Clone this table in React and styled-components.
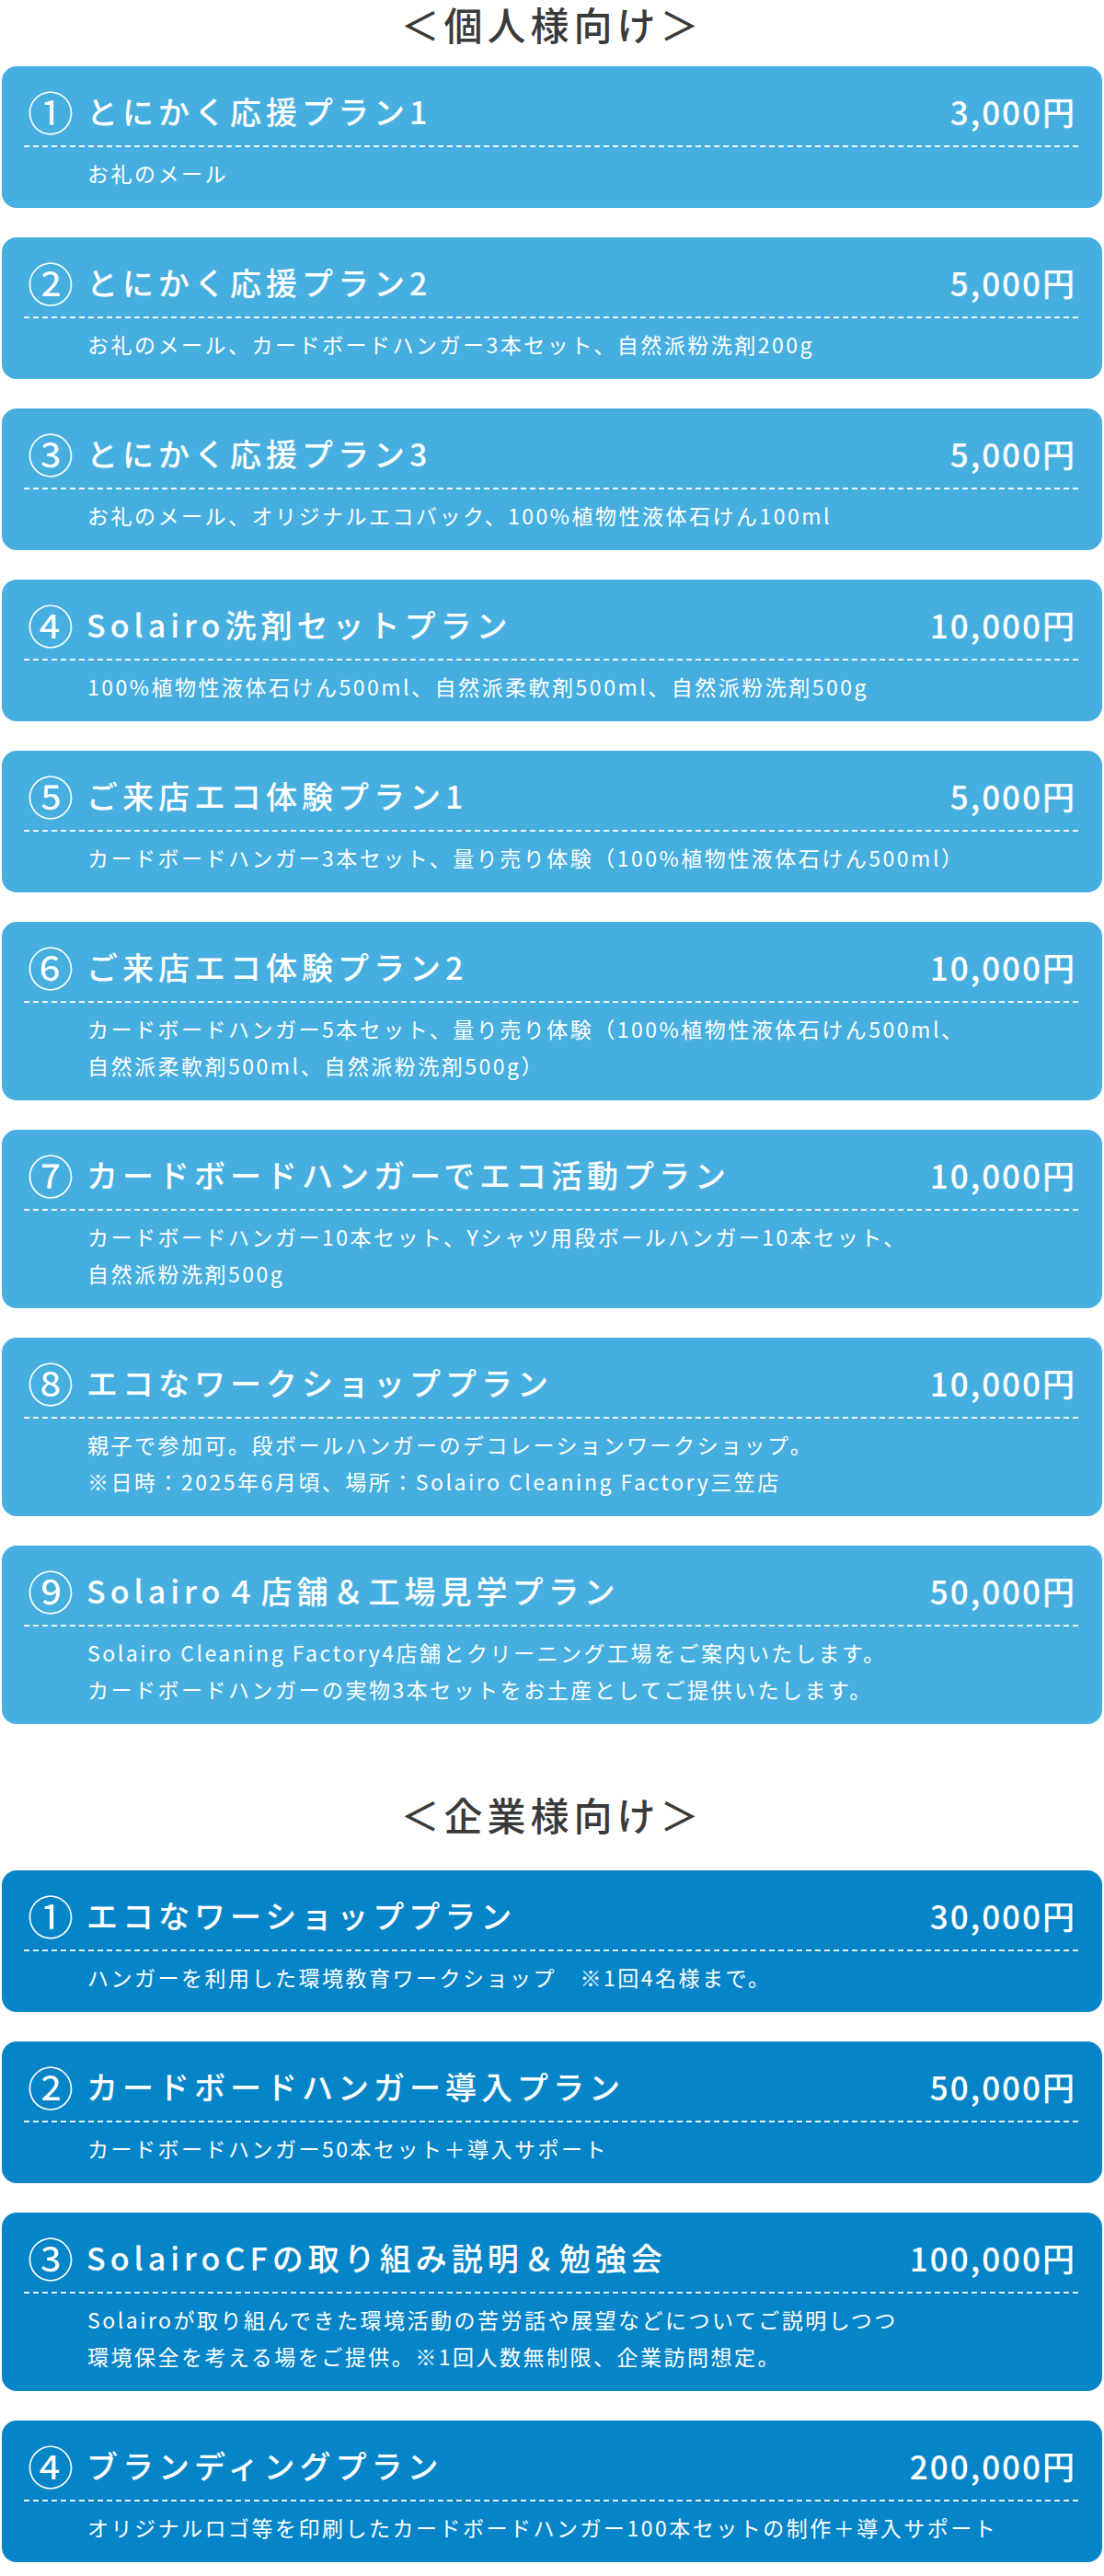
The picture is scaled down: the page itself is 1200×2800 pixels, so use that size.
import React from 'react'
import styled, { createGlobalStyle } from 'styled-components'

const GlobalStyle = createGlobalStyle`
  html, body {
    margin: 0;
    padding: 0;
    background: #ffffff;
  }
  body {
    font-family: "Noto Sans CJK JP", "Noto Sans", sans-serif;
  }
`

const personal = [
  { no: '①', title: 'とにかく応援プラン1', price: '3,000円', lines: ['お礼のメール'] },
  { no: '②', title: 'とにかく応援プラン2', price: '5,000円', lines: ['お礼のメール、カードボードハンガー3本セット、自然派粉洗剤200g'] },
  { no: '③', title: 'とにかく応援プラン3', price: '5,000円', lines: ['お礼のメール、オリジナルエコバック、100%植物性液体石けん100ml'] },
  { no: '④', title: 'Solairo洗剤セットプラン', price: '10,000円', lines: ['100%植物性液体石けん500ml、自然派柔軟剤500ml、自然派粉洗剤500g'] },
  { no: '⑤', title: 'ご来店エコ体験プラン1', price: '5,000円', lines: ['カードボードハンガー3本セット、量り売り体験（100%植物性液体石けん500ml）'] },
  {
    no: '⑥', title: 'ご来店エコ体験プラン2', price: '10,000円',
    lines: ['カードボードハンガー5本セット、量り売り体験（100%植物性液体石けん500ml、', '自然派柔軟剤500ml、自然派粉洗剤500g）'],
  },
  {
    no: '⑦', title: 'カードボードハンガーでエコ活動プラン', price: '10,000円',
    lines: ['カードボードハンガー10本セット、Yシャツ用段ボールハンガー10本セット、', '自然派粉洗剤500g'],
  },
  {
    no: '⑧', title: 'エコなワークショッププラン', price: '10,000円',
    lines: ['親子で参加可。段ボールハンガーのデコレーションワークショップ。', '※日時：2025年6月頃、場所：Solairo Cleaning Factory三笠店'],
  },
  {
    no: '⑨', title: 'Solairo４店舗＆工場見学プラン', price: '50,000円',
    lines: ['Solairo Cleaning Factory4店舗とクリーニング工場をご案内いたします。', 'カードボードハンガーの実物3本セットをお土産としてご提供いたします。'],
  },
]

const business = [
  { no: '①', title: 'エコなワーショッププラン', price: '30,000円', lines: ['ハンガーを利用した環境教育ワークショップ　※1回4名様まで。'] },
  { no: '②', title: 'カードボードハンガー導入プラン', price: '50,000円', lines: ['カードボードハンガー50本セット＋導入サポート'] },
  {
    no: '③', title: 'SolairoCFの取り組み説明＆勉強会', price: '100,000円',
    lines: ['Solairoが取り組んできた環境活動の苦労話や展望などについてご説明しつつ', '環境保全を考える場をご提供。※1回人数無制限、企業訪問想定。'],
  },
  { no: '④', title: 'ブランディングプラン', price: '200,000円', lines: ['オリジナルロゴ等を印刷したカードボードハンガー100本セットの制作＋導入サポート'] },
]

const Page = styled.div`
  width: 1200px;
  padding-bottom: 10px;
`

const Heading = styled.h2`
  margin: ${p => p.$top}px 0 ${p => p.$bottom}px;
  text-align: center;
  font-size: 42px;
  line-height: 52px;
  font-weight: 500;
  letter-spacing: 5px;
  color: #3a3a3a;
`

const List = styled.div`
  display: flex;
  flex-direction: column;
  gap: 32px;
`

const Card = styled.div`
  margin: 0 2px;
  padding: 26px 24px 18px;
  border-radius: 16px;
  background: ${p => (p.$dark ? '#0585c8' : '#46afdf')};
  color: #ffffff;
`

const TitleRow = styled.div`
  display: flex;
  align-items: center;
  justify-content: space-between;
  height: 44px;
  padding: 0 4px;
`

const Title = styled.div`
  display: flex;
  align-items: center;
  font-size: 34px;
  font-weight: 500;
  letter-spacing: 5px;
  white-space: nowrap;
`

const Num = styled.span`
  font-size: 50px;
  line-height: 44px;
  font-weight: 400;
  margin-right: 14px;
  letter-spacing: 0;
`

const Price = styled.div`
  font-size: 35px;
  font-weight: 500;
  letter-spacing: 2px;
  white-space: nowrap;
`

const Dashed = styled.div`
  height: 2px;
  margin-top: 16px;
  background: repeating-linear-gradient(to right, rgba(255, 255, 255, 0.9) 0 6px, transparent 6px 10px);
`

const Desc = styled.div`
  margin-top: 8px;
  padding-left: 69px;
  font-size: 23px;
  line-height: 40px;
  letter-spacing: 2.5px;
`

const Line = styled.div`
  white-space: nowrap;
`

function PlanCard({ plan, dark }) {
  return (
    <Card $dark={dark}>
      <TitleRow>
        <Title>
          <Num>{plan.no}</Num>
          {plan.title}
        </Title>
        <Price>{plan.price}</Price>
      </TitleRow>
      <Dashed />
      <Desc>
        {plan.lines.map((l, i) => (
          <Line key={i}>{l}</Line>
        ))}
      </Desc>
    </Card>
  )
}

export default function App() {
  return (
    <>
      <GlobalStyle />
      <Page>
        <Heading $top={0} $bottom={20}>＜個人様向け＞</Heading>
        <List>
          {personal.map((p, i) => (
            <PlanCard key={i} plan={p} />
          ))}
        </List>
        <Heading $top={72} $bottom={35}>＜企業様向け＞</Heading>
        <List>
          {business.map((p, i) => (
            <PlanCard key={i} plan={p} dark />
          ))}
        </List>
      </Page>
    </>
  )
}
